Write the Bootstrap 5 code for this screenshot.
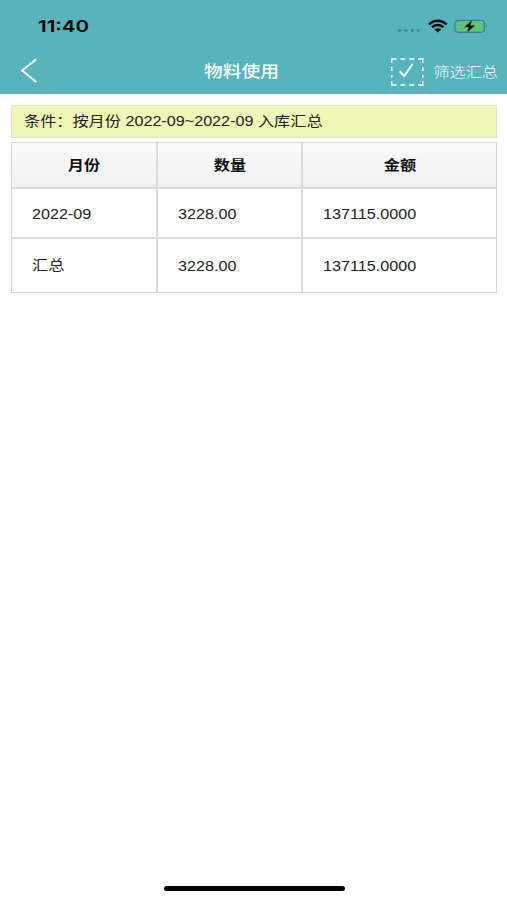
<!DOCTYPE html>
<html lang="zh-CN">
<head>
<meta charset="utf-8">
<meta name="viewport" content="width=device-width, initial-scale=1">
<title>物料使用</title>
<link href="https://cdn.jsdelivr.net/npm/bootstrap@5.3.0/dist/css/bootstrap.min.css" rel="stylesheet">
<style>
body{font-family:"Liberation Sans","Noto Sans CJK SC",sans-serif;font-size:14px;line-height:20px;color:#222;background:#fff;height:900px;overflow:hidden}
.app-head{background:#57b3bc;height:94px;color:#fff}
.status-row{height:52px;padding:0 19px 0 38px}
.clock{font:600 16.5px/20px Inter,sans-serif;color:#000;transform-origin:0 50%;transform:scaleX(1.24)}
.title-row{height:40px;display:grid;grid-template-columns:183.5px auto 1fr;padding:0 9px 0 20px}
.page-title{font-size:16px;font-weight:500;transform:scaleX(1.17);transform-origin:0 50%;margin:0;line-height:20px}
.wide{display:inline-block;white-space:nowrap;transform:scaleX(1.154);transform-origin:0 50%}
.wide-end{transform-origin:100% 50%}
.wide-mid{transform-origin:50% 50%}
.filter-label{font-weight:300}
.filter-icon{margin:0 18px 0 0}
.main-area{padding:11px 10px 0 11px}
.condition{height:33px;background:#f0f6b6;border:1px solid #e2e5cd;padding:0 12px;margin-bottom:4px}
.condition .wide{margin-top:-1px}
.sum-table{table-layout:fixed;border-collapse:separate;border-spacing:0;width:486px;margin:0;border:1px solid #d6d6d6}
.sum-table th,.sum-table td{border:0 solid #dcdcdc;border-width:0 2px 2px 0;padding:0 0 0 20px;vertical-align:middle}
.sum-table th:last-child,.sum-table td:last-child{border-right-width:0}
.sum-table td+td{padding-left:19.5px}
.sum-table .r1 td{padding-top:2px}
.sum-table .r2 td{border-bottom-width:0}
.sum-table .r2 td:first-child{padding-bottom:2px}
.sum-table th{height:46px;padding:0;text-align:center;font-weight:700;color:#111;background:linear-gradient(#fbfbfb,#f0f0f0)}
.sum-table .r1{height:50px}
.sum-table .r2{height:53px}
.home-bar{width:181px;height:5.5px;border-radius:3px;background:#000;margin:0 auto 9px 163.5px}
svg{display:block}
</style>
</head>
<body class="d-flex flex-column">
<header class="app-head flex-shrink-0">
  <div class="status-row d-flex align-items-center justify-content-between">
    <span class="clock">11:40</span>
    <svg width="92" height="20" viewBox="396 16 92 20">
      <g fill="#3f8a93"><circle cx="399.500" cy="30.500" r="1.700"/><circle cx="406" cy="30.500" r="1.700"/><circle cx="412.500" cy="30.500" r="1.700"/><circle cx="418.500" cy="30.500" r="1.700"/></g>
      <g fill="none" stroke="#000" stroke-width="2.300"><path d="M428.800 24.300Q437.500 17.300 446.700 24.300"/><path d="M432 27.200Q437.700 22.800 443.500 27.200"/></g>
      <path d="M434.300 29.300Q437.700 27 441.200 29.300L437.700 32.500Z"/>
      <rect x="455" y="20.300" width="29.500" height="12" rx="3.500" fill="none" stroke="#3c7f88" stroke-width="1.200"/>
      <rect x="457" y="22" width="25.500" height="8.700" rx="2" fill="#62c866"/>
      <path d="M485.800 24.200q2.200 2 0 4.200z" fill="#3c7f88"/>
      <path d="M472.300 19.800L464 27.200H468.600L466.800 33L475.300 25.300H470.500Z" stroke="#57b3bc" stroke-width=".4"/>
    </svg>
  </div>
  <div class="title-row align-items-center">
    <svg width="18" height="26" viewBox="0 0 18 26" class="mb-1"><path d="M16.200 2.200L2.200 13.500L16.200 25" fill="none" stroke="#fff" stroke-width="2"/></svg>
    <h1 class="page-title">物料使用</h1>
    <div class="d-flex align-items-center justify-content-end">
      <svg width="34" height="28" viewBox="0 0 34 28" class="filter-icon flex-shrink-0"><path d="M1 5V1H6M10 1H15M19 1H24M28 1H33V5M33 9V13M33 17V20M33 23V27H28M24 27H19M15 27H10M6 27H1V23M1 20V17M1 13V9" transform="translate(.8 0) scale(.97 1)" fill="none" stroke="#fff" stroke-width="1.500"/><path d="M9.700 13.200L14.300 18L22.500 6" fill="none" stroke="#fff" stroke-width="2"/></svg>
      <span class="wide wide-end filter-label">筛选汇总</span>
    </div>
  </div>
</header>
<main class="main-area flex-grow-1">
  <div class="condition d-flex align-items-center"><span class="wide">条件：按月份 2022-09~2022-09 入库汇总</span></div>
  <table class="sum-table">
    <colgroup><col style="width:146px"><col style="width:145px"><col style="width:193px"></colgroup>
    <thead><tr><th><span class="wide wide-mid">月份</span></th><th><span class="wide wide-mid">数量</span></th><th><span class="wide wide-mid">金额</span></th></tr></thead>
    <tbody>
      <tr class="r1"><td><span class="wide">2022-09</span></td><td><span class="wide">3228.00</span></td><td><span class="wide">137115.0000</span></td></tr>
      <tr class="r2"><td><span class="wide">汇总</span></td><td><span class="wide">3228.00</span></td><td><span class="wide">137115.0000</span></td></tr>
    </tbody>
  </table>
</main>
<div class="home-bar flex-shrink-0"></div>
<script src="https://cdn.jsdelivr.net/npm/bootstrap@5.3.0/dist/js/bootstrap.bundle.min.js"></script>
</body>
</html>
